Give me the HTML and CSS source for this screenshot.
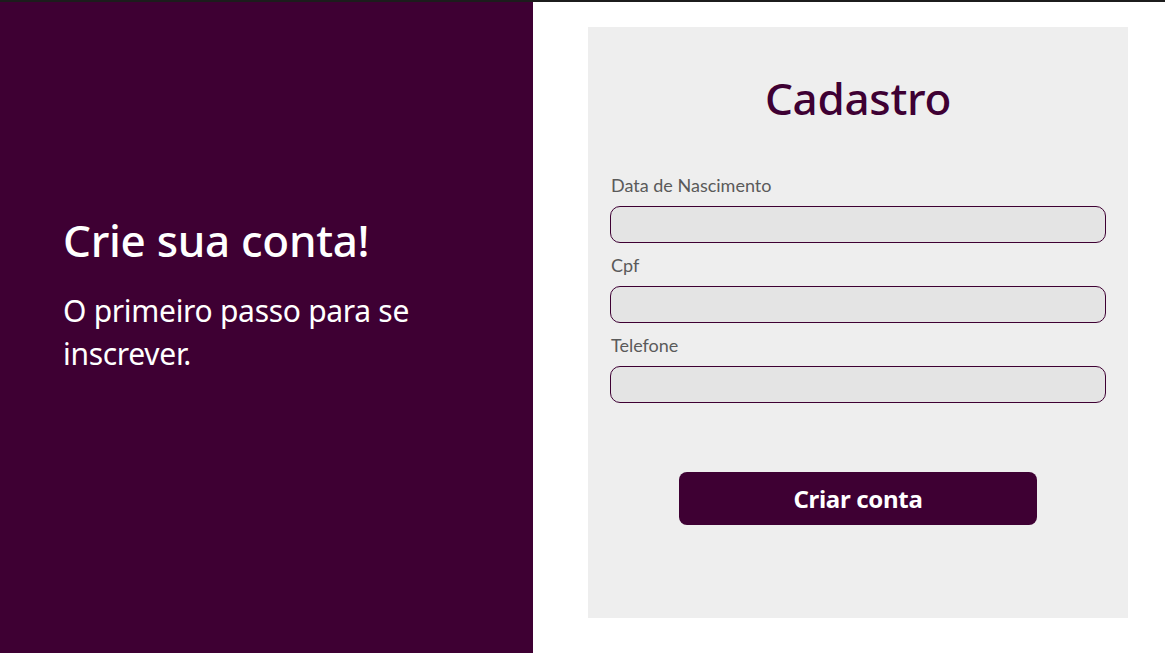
FILE: index.html
```html
<!DOCTYPE html>
<html lang="pt-BR">
<head>
<meta charset="utf-8">
<title>Cadastro</title>
<link rel="stylesheet" href="styles.css">
</head>
<body>
<div class="page">
  <section class="intro">
    <h1 class="intro-title">Crie sua conta!</h1>
    <p class="intro-text">O primeiro passo para se inscrever.</p>
  </section>
  <section class="side">
    <form class="card">
      <h2 class="card-title">Cadastro</h2>
      <div class="fields">
        <label class="field">
          <span class="field-label">Data de Nascimento</span>
          <input class="field-input" type="text">
        </label>
        <label class="field">
          <span class="field-label">Cpf</span>
          <input class="field-input" type="text">
        </label>
        <label class="field">
          <span class="field-label">Telefone</span>
          <input class="field-input" type="text">
        </label>
      </div>
      <button class="submit" type="button">Criar conta</button>
    </form>
  </section>
</div>
</body>
</html>
```

FILE: styles.css
```css
* { box-sizing: border-box; }
html, body { margin: 0; padding: 0; height: 100%; }
body {
  background: #ffffff;
  border-top: 2px solid #1c1c1c;
  font-family: "Noto Sans", "Open Sans", sans-serif;
}
.page {
  display: flex;
  height: 651px;
}
.intro {
  width: 533px;
  flex: none;
  background: #3e0033;
  color: #ffffff;
  padding: 0 63px 66px;
  display: flex;
  flex-direction: column;
  justify-content: center;
}
.intro-title {
  margin: 0 0 23px;
  font-size: 44px;
  font-weight: 500;
  line-height: 1.2;
  letter-spacing: -0.3px;
}
.intro-text {
  margin: 0;
  font-size: 30px;
  line-height: 43px;
  letter-spacing: -0.3px;
}
.side {
  flex: 1;
  padding: 25px 37px 35px 55px;
  display: flex;
}
.card {
  flex: 1;
  background: #eeeeee;
  padding: 47px 22px 0 22px;
  display: flex;
  flex-direction: column;
}
.card-title {
  margin: 0 0 51px;
  text-align: center;
  color: #3e0033;
  font-size: 44px;
  font-weight: 500;
  line-height: 1.1;
  letter-spacing: -0.3px;
}
.fields {
  display: flex;
  flex-direction: column;
  gap: 10px;
}
.field {
  display: flex;
  flex-direction: column;
  gap: 9px;
}
.field-label {
  font-family: "Lato", sans-serif;
  font-size: 18px;
  line-height: 24px;
  color: #5a5a5a;
  padding-left: 1px;
}
.field-input {
  height: 37px;
  border: 1px solid #3e0033;
  border-radius: 10px;
  background: #e4e4e4;
  width: 100%;
}
.submit {
  margin: 69px auto 0;
  width: 358px;
  height: 53px;
  border: none;
  border-radius: 8px;
  background: #3e0033;
  color: #ffffff;
  font-family: "Noto Sans", sans-serif;
  font-size: 24px;
  font-weight: 700;
  letter-spacing: -0.3px;
}
```
